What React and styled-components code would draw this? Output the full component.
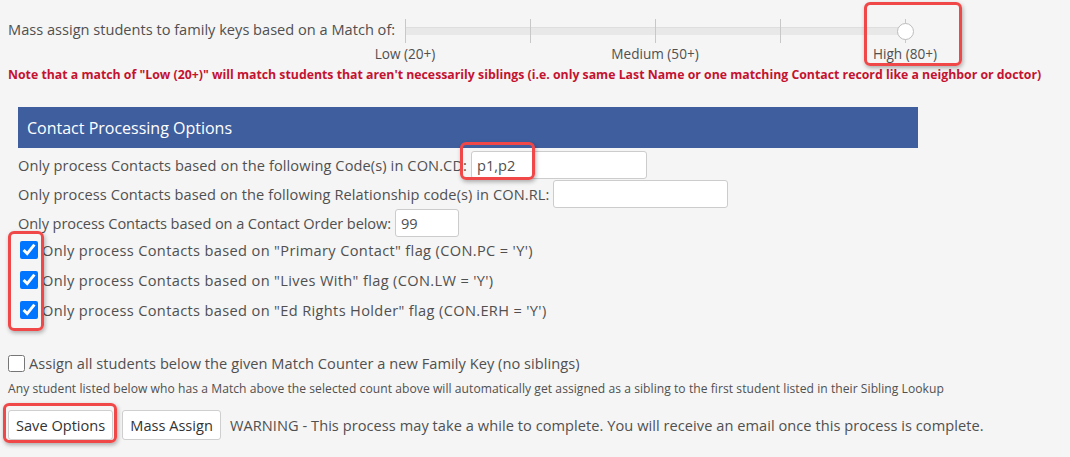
import React from 'react'
import styled, { createGlobalStyle } from 'styled-components'

const Global = createGlobalStyle`
  html, body { margin: 0; padding: 0; background: #f5f5f5; }
  body { font-family: 'Open Sans', 'Liberation Sans', sans-serif; color: #505050; }
`

const Page = styled.div`
  position: relative;
  width: 1070px;
  height: 457px;
  padding: 8px;
  box-sizing: border-box;
  font-size: 14.6px;
`

const MatchRow = styled.div`
  display: flex;
  align-items: flex-start;
  height: 36px;
`

const MatchLabel = styled.span`
  width: 397px;
  padding-top: 11px;
  line-height: 20px;
  white-space: nowrap;
`

const Slider = styled.div`
  position: relative;
  width: 500px;
  height: 36px;
`

const Track = styled.div`
  position: absolute;
  left: 0;
  right: 0;
  top: 19px;
  height: 7px;
  background: #e8e8e8;
  border-top: 1px solid #dedede;
`

const Tick = styled.div`
  position: absolute;
  top: 11px;
  width: 1px;
  height: 24px;
  background: #c8c8c8;
  left: ${p => p.$at}px;
`

const Thumb = styled.div`
  position: absolute;
  left: 492px;
  top: 15px;
  width: 15px;
  height: 15px;
  border-radius: 50%;
  background: #fff;
  border: 1px solid #bdbdbd;
`

const Scale = styled.div`
  display: flex;
  margin-left: 272px;
  height: 18px;
  align-items: center;
  font-size: 13.6px;
`

const ScaleLabel = styled.span`
  width: 250px;
  text-align: center;
`

const Note = styled.div`
  color: #c41230;
  font-weight: 700;
  font-size: 12.3px;
  line-height: 18px;
  margin-top: 4px;
  white-space: nowrap;
`

const Panel = styled.section`
  margin: 23px 0 0 10px;
`

const PanelHead = styled.h2`
  margin: 0;
  width: 900px;
  height: 41px;
  box-sizing: border-box;
  padding-left: 9px;
  display: flex;
  align-items: center;
  background: #3f5e9e;
  color: #fff;
  font-size: 16px;
  font-weight: 400;
`

const FieldList = styled.div`
  margin-top: 2px;
  display: flex;
  flex-direction: column;
`

const FieldRow = styled.label`
  display: flex;
  align-items: center;
  height: 29px;
  gap: 4px;
  white-space: nowrap;
  letter-spacing: ${p => p.$ls || 0}px;
`

const TextBox = styled.input`
  width: ${p => p.$w}px;
  height: 28px;
  box-sizing: border-box;
  border: 1px solid #ccc;
  border-radius: 3px;
  background: #fff;
  padding: 0 5px;
  font: inherit;
  letter-spacing: 0;
  color: #505050;
  outline: none;
`

const CheckList = styled.div`
  display: flex;
  flex-direction: column;
  margin-top: -2px;
  padding-left: 2px;
  letter-spacing: 0.35px;
`

const CheckRow = styled.label`
  display: flex;
  align-items: center;
  height: ${p => p.$h || 30}px;
  gap: 4px;
  white-space: nowrap;
`

const Check = styled.input`
  margin: 0;
  width: ${p => p.$size || 18}px;
  height: ${p => p.$size || 18}px;
  accent-color: #0075ff;
`

const Footer = styled.div`
  margin-top: 28px;
  letter-spacing: 0.05px;
`

const Small = styled.div`
  font-size: 12.1px;
  line-height: 18px;
  margin-top: 7px;
  white-space: nowrap;
`

const ButtonRow = styled.div`
  display: flex;
  align-items: center;
  gap: 9px;
  margin-top: 12px;
`

const Button = styled.button`
  height: 30px;
  padding: 0 7px;
  background: #fff;
  border: 1px solid #cfcfcf;
  border-radius: 3px;
  font: inherit;
  color: #333;
`

const Callout = styled.div`
  position: absolute;
  left: ${p => p.$x}px;
  top: ${p => p.$y}px;
  width: ${p => p.$w}px;
  height: ${p => p.$h}px;
  box-sizing: border-box;
  border: 3px solid #f04848;
  border-radius: 6px;
  box-shadow: 1px 2px 4px rgba(0, 0, 0, 0.3);
  pointer-events: none;
`

const ticks = [0, 125, 250, 375, 500]

export default function App() {
  return (
    <Page>
      <Global />
      <MatchRow>
        <MatchLabel>Mass assign students to family keys based on a Match of:</MatchLabel>
        <Slider>
          <Track />
          {ticks.map(t => <Tick key={t} $at={t} />)}
          <Thumb />
        </Slider>
      </MatchRow>
      <Scale>
        <ScaleLabel>Low (20+)</ScaleLabel>
        <ScaleLabel>Medium (50+)</ScaleLabel>
        <ScaleLabel>High (80+)</ScaleLabel>
      </Scale>
      <Note>
        Note that a match of "Low (20+)" will match students that aren't necessarily siblings (i.e. only same Last Name or one matching Contact record like a neighbor or doctor)
      </Note>

      <Panel>
        <PanelHead>Contact Processing Options</PanelHead>
        <FieldList>
          <FieldRow $ls={0.1}>
            Only process Contacts based on the following Code(s) in CON.CD:
            <TextBox $w={176} defaultValue="p1,p2" />
          </FieldRow>
          <FieldRow $ls={0.08}>
            Only process Contacts based on the following Relationship code(s) in CON.RL:
            <TextBox $w={175} defaultValue="" />
          </FieldRow>
          <FieldRow $ls={-0.1}>
            Only process Contacts based on a Contact Order below:
            <TextBox $w={64} defaultValue="99" />
          </FieldRow>
        </FieldList>
        <CheckList>
          <CheckRow>
            <Check type="checkbox" defaultChecked />
            Only process Contacts based on "Primary Contact" flag (CON.PC = 'Y')
          </CheckRow>
          <CheckRow>
            <Check type="checkbox" defaultChecked />
            Only process Contacts based on "Lives With" flag (CON.LW = 'Y')
          </CheckRow>
          <CheckRow>
            <Check type="checkbox" defaultChecked />
            Only process Contacts based on "Ed Rights Holder" flag (CON.ERH = 'Y')
          </CheckRow>
        </CheckList>
      </Panel>

      <Footer>
        <CheckRow $h={20}>
          <Check type="checkbox" $size={17} />
          Assign all students below the given Match Counter a new Family Key (no siblings)
        </CheckRow>
        <Small>
          Any student listed below who has a Match above the selected count above will automatically get assigned as a sibling to the first student listed in their Sibling Lookup
        </Small>
        <ButtonRow>
          <Button>Save Options</Button>
          <Button>Mass Assign</Button>
          <span>WARNING - This process may take a while to complete. You will receive an email once this process is complete.</span>
        </ButtonRow>
      </Footer>

      <Callout $x={864} $y={2} $w={98} $h={64} />
      <Callout $x={460} $y={142} $w={75} $h={38} />
      <Callout $x={8} $y={231} $w={36} $h={100} />
      <Callout $x={3} $y={403} $w={114} $h={40} />
    </Page>
  )
}
